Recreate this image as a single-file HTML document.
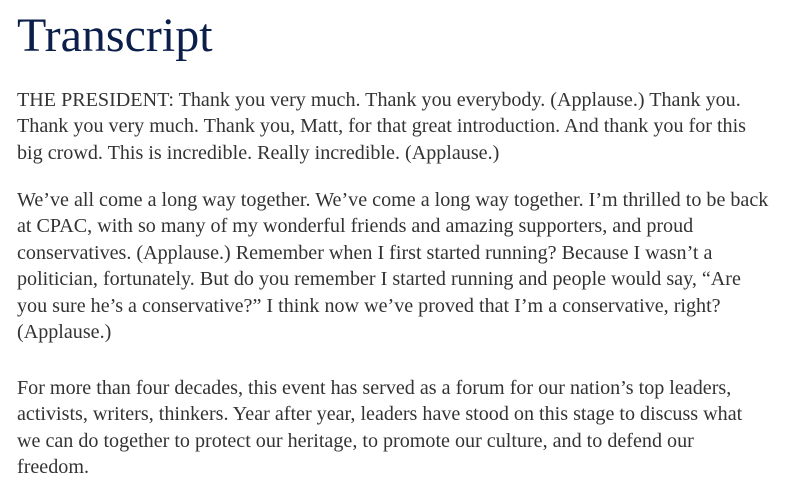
<!DOCTYPE html>
<html><head><meta charset="utf-8"><style>
html,body{margin:0;padding:0;background:#fff;width:795px;height:491px;overflow:hidden}
body{font-family:"Liberation Serif",serif;color:#333}
h1{position:absolute;left:17px;top:8px;margin:0;font-weight:normal;font-size:48px;line-height:56px;color:#0c1f4a}
.p{position:absolute;left:17px;font-size:20.1px;line-height:26.4px;white-space:nowrap;margin:0}
</style></head><body>
<h1>Transcript</h1>
<p class="p" style="top:87px">THE PRESIDENT: Thank you very much. Thank you everybody. (Applause.) Thank you.<br>Thank you very much. Thank you, Matt, for that great introduction. And thank you for this<br>big crowd. This is incredible. Really incredible. (Applause.)</p>
<p class="p" style="top:187px">We’ve all come a long way together. We’ve come a long way together. I’m thrilled to be back<br>at CPAC, with so many of my wonderful friends and amazing supporters, and proud<br>conservatives. (Applause.) Remember when I first started running? Because I wasn’t a<br>politician, fortunately. But do you remember I started running and people would say, “Are<br>you sure he’s a conservative?” I think now we’ve proved that I’m a conservative, right?<br>(Applause.)</p>
<p class="p" style="top:375px">For more than four decades, this event has served as a forum for our nation’s top leaders,<br>activists, writers, thinkers. Year after year, leaders have stood on this stage to discuss what<br>we can do together to protect our heritage, to promote our culture, and to defend our<br>freedom.</p>
</body></html>
